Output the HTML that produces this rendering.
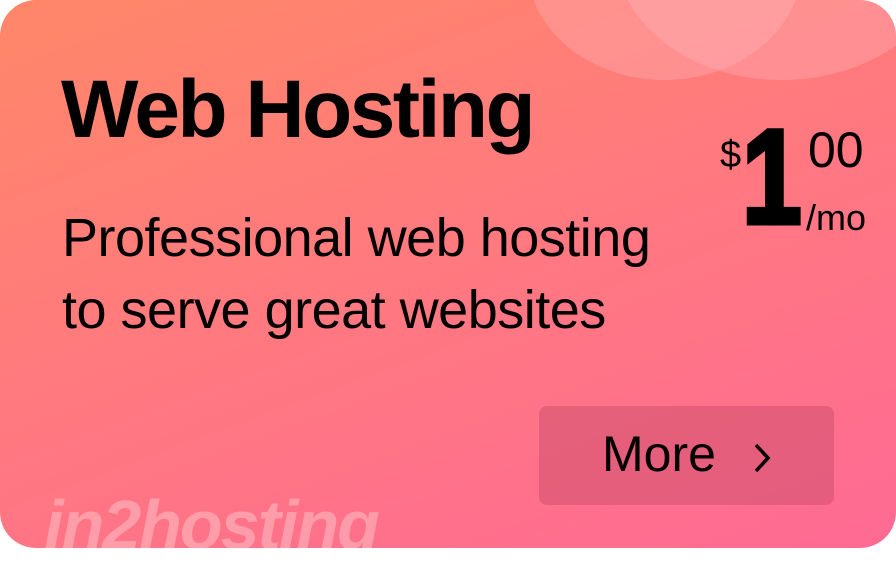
<!DOCTYPE html>
<html><head><meta charset="utf-8"><style>
html,body{margin:0;padding:0;background:#fff;width:896px;height:581px;overflow:hidden}
.card{position:absolute;left:0;top:0;width:896px;height:548px;border-radius:36px;overflow:hidden;
background:linear-gradient(160deg,#ff8768 0%,#ff7a7e 45%,#ff6a94 100%);font-family:"Liberation Sans",sans-serif;color:#000}
.e{position:absolute;border-radius:50%}
.t{position:absolute;white-space:nowrap}
</style></head><body>
<div class="card">
<div class="e" style="left:527px;top:-150px;width:275px;height:230px;background:rgba(255,190,200,0.3)"></div>
<div class="e" style="left:617px;top:-170px;width:330px;height:250px;background:rgba(255,190,200,0.3)"></div>
<div class="t" style="left:61px;top:60px;font-size:82px;font-weight:bold;letter-spacing:-2.5px;line-height:100px">Web Hosting</div>
<div class="t" style="left:62px;top:202px;font-size:54px;line-height:72px;letter-spacing:-0.5px">Professional web hosting<br>to serve great websites</div>
<div class="t" style="left:720px;top:130px;font-size:38px;line-height:50px">$</div>
<div class="t" style="left:742px;top:108px;font-size:134px;font-weight:bold;line-height:140px;transform:scaleX(0.8);transform-origin:left;-webkit-text-stroke:5px #000">1</div>
<div class="t" style="left:808px;top:120px;font-size:50px;line-height:60px">00</div>
<div class="t" style="left:806px;top:196px;font-size:36px;line-height:44px">/mo</div>
<div style="position:absolute;left:539px;top:406px;width:295px;height:99px;border-radius:8px;background:rgba(190,70,100,0.4)"></div>
<div class="t" style="left:602px;top:424px;font-size:50px;line-height:60px">More</div>
<svg style="position:absolute;left:750px;top:440px" width="26" height="36" viewBox="0 0 26 36"><path d="M6 5 L18 18 L6 31" fill="none" stroke="#000" stroke-width="3.5"/></svg>
<div class="t" style="left:44px;top:480px;font-size:70px;font-weight:bold;font-style:italic;color:rgba(255,220,220,0.4);line-height:90px;letter-spacing:-2px">in2hosting</div>
</div>
</body></html>
